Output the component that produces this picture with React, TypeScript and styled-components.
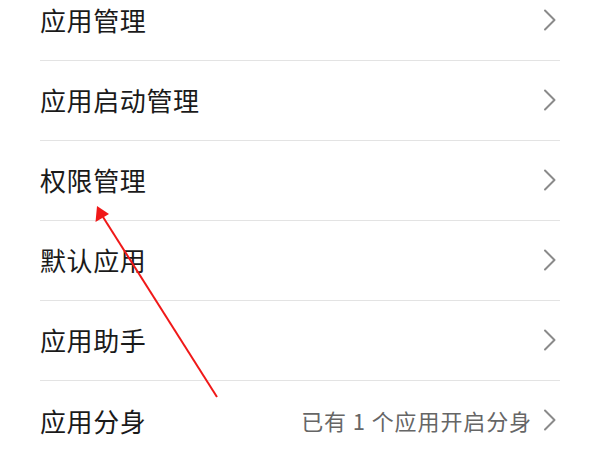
import React from "react";
import styled, { createGlobalStyle } from "styled-components";

const GlobalStyle = createGlobalStyle`
  html, body {
    margin: 0;
    padding: 0;
    background: #ffffff;
    overflow: hidden;
  }
  body {
    font-family: "Noto Sans CJK SC", "Noto Sans", sans-serif;
  }
`;

const Screen = styled.div`
  position: relative;
  width: 600px;
  height: 450px;
  overflow: hidden;
  background: #ffffff;
`;

const List = styled.ul`
  list-style: none;
  margin: -19px 0 0;
  padding: 0 40px;
`;

const Row = styled.li`
  display: flex;
  align-items: center;
  height: 80px;
  border-bottom: 1px solid #e3e3e3;
  box-sizing: border-box;

  &:last-child {
    border-bottom: none;
  }
`;

const Title = styled.span`
  flex: 1;
  font-size: 26px;
  color: #1a1a1a;
  letter-spacing: 0.6px;
  margin-top: -2px;
`;

const Hint = styled.span`
  font-size: 22px;
  color: #666666;
  letter-spacing: 0.9px;
  margin-right: 11px;
  margin-top: -2px;
`;

const Chevron = styled.svg`
  width: 14px;
  height: 22px;
  margin-right: 3px;
  margin-top: -2px;
  flex-shrink: 0;
`;

const Arrow = styled.svg`
  position: absolute;
  left: 0;
  top: 0;
  pointer-events: none;
`;

const items: { title: string; hint?: string }[] = [
  { title: "应用管理" },
  { title: "应用启动管理" },
  { title: "权限管理" },
  { title: "默认应用" },
  { title: "应用助手" },
  { title: "应用分身", hint: "已有 1 个应用开启分身" },
];

const ChevronIcon = () => (
  <Chevron viewBox="0 0 14 22">
    <path
      d="M2 1.5 L11.5 11 L2 20.5"
      fill="none"
      stroke="#8a8a8a"
      strokeWidth="2"
      strokeLinecap="round"
      strokeLinejoin="round"
    />
  </Chevron>
);

export default function App() {
  return (
    <Screen>
      <GlobalStyle />
      <List>
        {items.map((it) => (
          <Row key={it.title}>
            <Title>{it.title}</Title>
            {it.hint && <Hint>{it.hint}</Hint>}
            <ChevronIcon />
          </Row>
        ))}
      </List>
      <Arrow width="600" height="450" viewBox="0 0 600 450">
        <line x1="217" y1="397" x2="103" y2="217" stroke="#f01818" strokeWidth="2" />
        <polygon points="97,206 95.5,222 109,214" fill="#f01818" />
      </Arrow>
    </Screen>
  );
}
